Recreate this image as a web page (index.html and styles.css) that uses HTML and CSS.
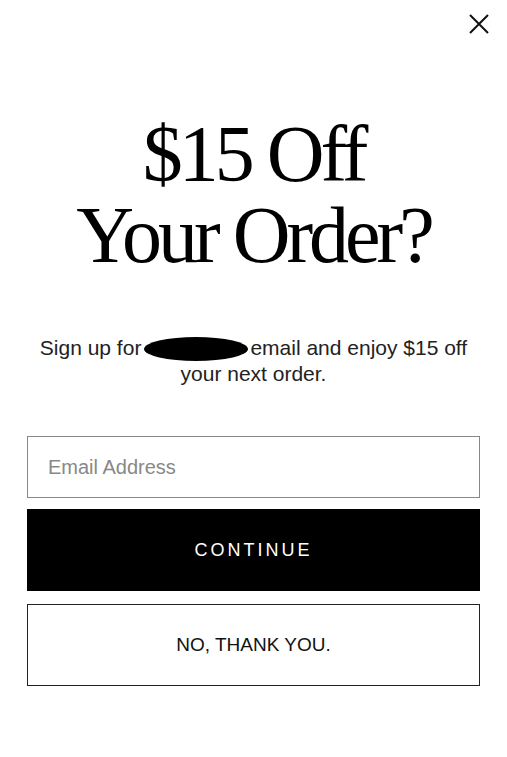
FILE: index.html
```html
<!DOCTYPE html>
<html lang="en">
<head>
    <meta charset="UTF-8">
    <meta name="viewport" content="width=device-width, initial-scale=1.0">
    <title>$15 Off Your Order?</title>
    <link rel="stylesheet" href="styles.css">
</head>
<body>
    <div class="modal">
        <div class="modal-top">
            <button class="close" aria-label="Close">
                <svg width="20" height="20" viewBox="0 0 20 20">
                    <path d="M1 1 L19 19 M19 1 L1 19" stroke="#111" stroke-width="2" fill="none"/>
                </svg>
            </button>
        </div>

        <h1>$15 Off<br>Your Order?</h1>

        <p class="intro">Sign up for<span class="redacted"></span>email and enjoy $15 off your next order.</p>

        <form class="signup">
            <input type="email" placeholder="Email Address">
            <button type="submit" class="btn-continue">CONTINUE</button>
            <button type="button" class="btn-decline">NO, THANK YOU.</button>
        </form>
    </div>
</body>
</html>
```

FILE: styles.css
```css
body {
    margin: 0;
    background-color: #fff;
    font-family: 'Liberation Sans', Arial, sans-serif;
    color: #222;
}

.modal {
    width: 453px;
    margin: 0 auto;
    padding-bottom: 70px;
}

.modal-top {
    display: flex;
    justify-content: flex-end;
    padding-top: 14px;
    margin-right: -9px;
}

.close {
    background: none;
    border: none;
    padding: 0;
    width: 20px;
    height: 20px;
    cursor: pointer;
}

h1 {
    font-family: 'Liberation Serif', 'Times New Roman', serif;
    font-weight: normal;
    font-size: 80px;
    line-height: 81px;
    letter-spacing: -4px;
    text-align: center;
    color: #000;
    margin: 80px 0 0;
}

.intro {
    font-size: 21px;
    line-height: 25px;
    text-align: center;
    margin: 59px -6px 0;
}

.redacted {
    display: inline-block;
    width: 104px;
    height: 24px;
    border-radius: 50%;
    background-color: #000;
    vertical-align: -6px;
    margin: 0 2px 0 3px;
}

.signup {
    display: flex;
    flex-direction: column;
    margin-top: 50px;
}

.signup input {
    height: 62px;
    box-sizing: border-box;
    border: 1px solid #888;
    padding: 0 20px;
    font-family: inherit;
    font-size: 20px;
    color: #222;
    outline: none;
}

.signup input::placeholder {
    color: #888;
}

.btn-continue {
    margin-top: 11px;
    height: 82px;
    border: none;
    background-color: #000;
    color: #fff;
    font-family: inherit;
    font-size: 18px;
    letter-spacing: 3px;
    cursor: pointer;
}

.btn-decline {
    margin-top: 13px;
    height: 82px;
    border: 1px solid #222;
    background-color: #fff;
    color: #111;
    font-family: inherit;
    font-size: 19px;
    cursor: pointer;
}
```
